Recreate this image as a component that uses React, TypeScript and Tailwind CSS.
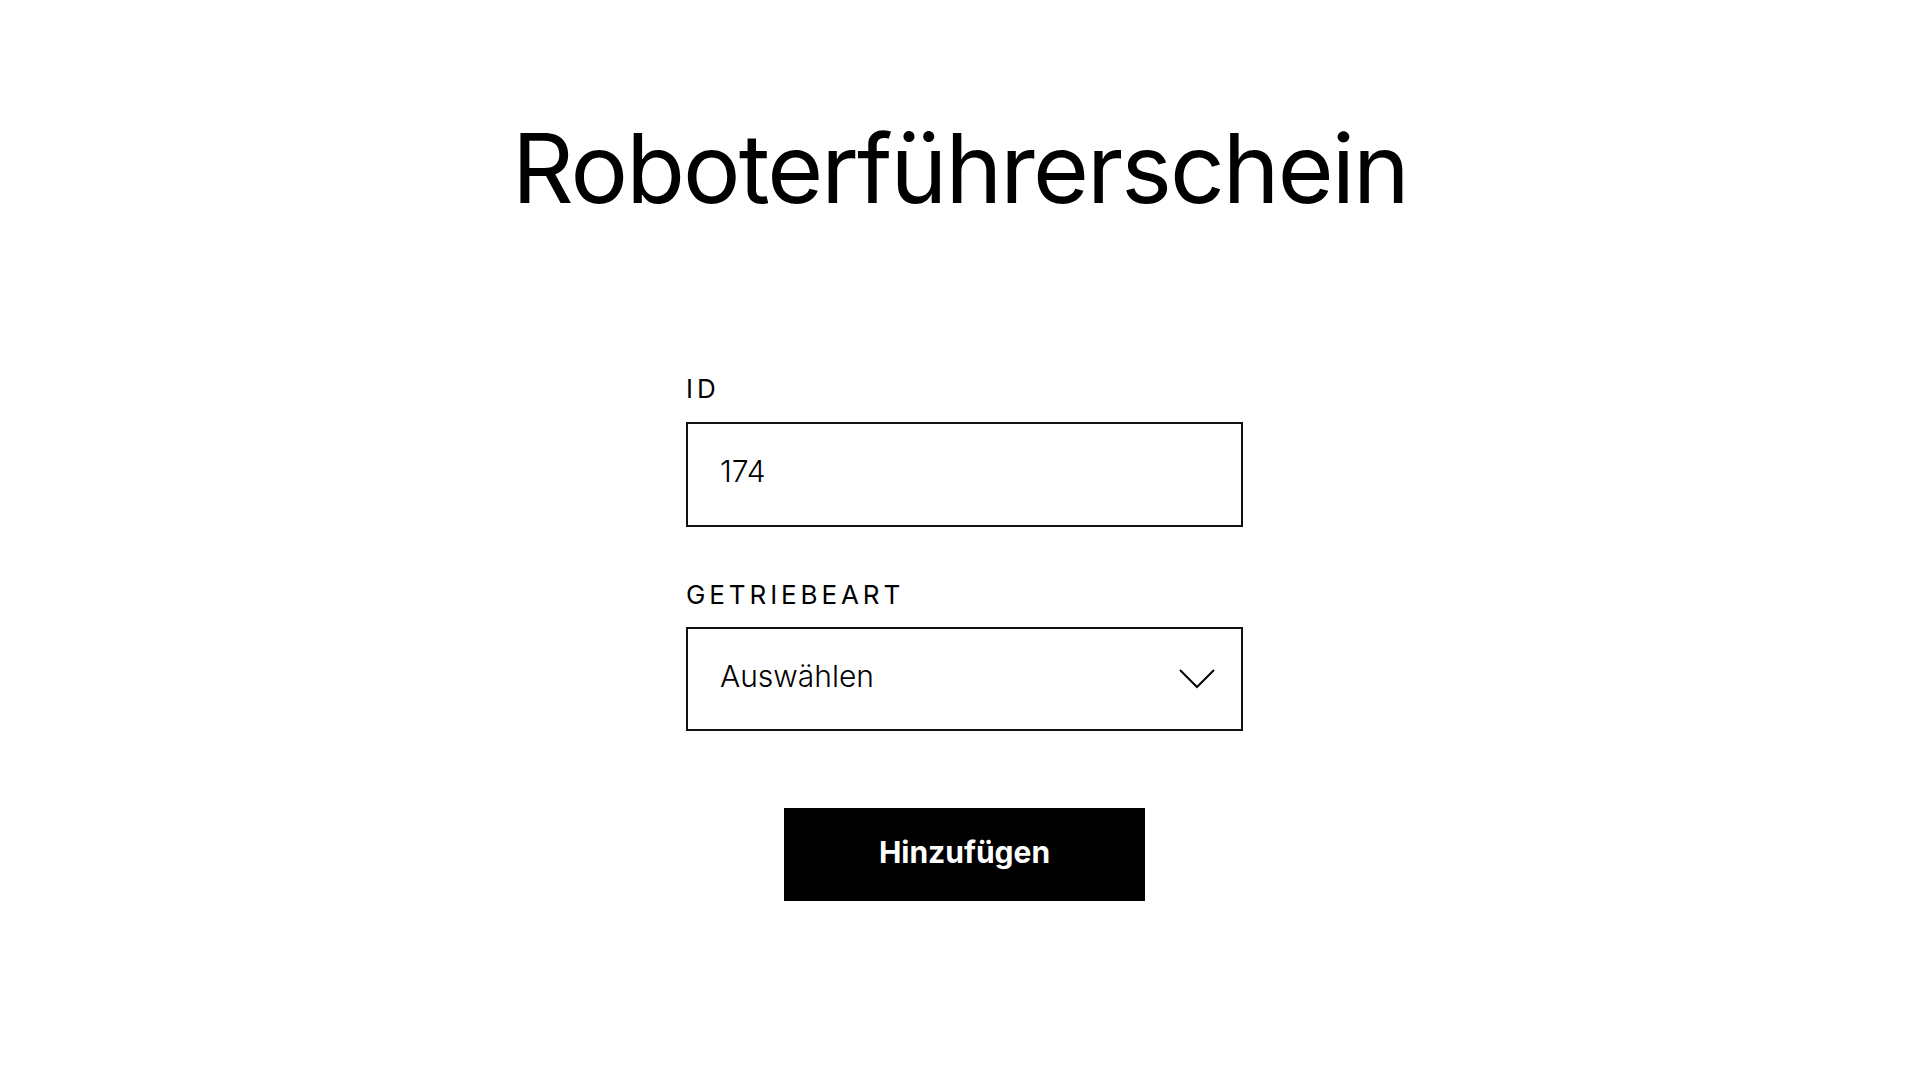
export default function App() {
  return (
    <div className="min-h-screen bg-white flex flex-col items-center text-black font-['Inter',sans-serif]">
      <h1 className="mt-[120px] text-[96px] leading-none font-normal tracking-[-0.02em]">Roboterführerschein</h1>

      <form className="mt-[160px] ml-[9px] w-[557px] flex flex-col" onSubmit={e => e.preventDefault()}>
        <label className="text-[26px] leading-none tracking-[0.15em]">ID</label>
        <div className="mt-[20px] h-[105px] border-2 border-[#111] flex items-center px-[32px] pb-[6px] text-[30px] font-light">
          174
        </div>

        <label className="mt-[55px] text-[26px] leading-none tracking-[0.15em]">GETRIEBEART</label>
        <div className="mt-[19px] h-[104px] border-2 border-[#111] flex items-center justify-between pl-[32px] pr-[26px] text-[30px] font-light">
          <span className="pb-[6px]">Auswählen</span>
          <svg width="36" height="22" viewBox="0 0 36 22" fill="none" aria-hidden="true">
            <path d="M1 2 L18 19 L35 2" stroke="black" strokeWidth="2" />
          </svg>
        </div>

        <div className="mt-[77px] flex justify-center">
          <button className="w-[361px] h-[93px] pb-[5px] bg-black text-white text-[30px] font-bold">Hinzufügen</button>
        </div>
      </form>
    </div>
  );
}
